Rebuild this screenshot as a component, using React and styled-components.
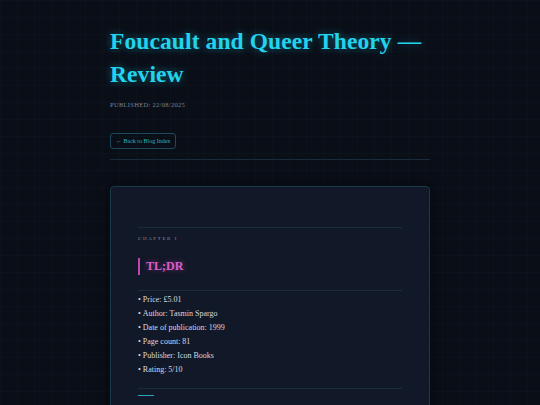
import React from "react";
import styled, { createGlobalStyle } from "styled-components";

const GlobalStyle = createGlobalStyle`
  html, body {
    margin: 0;
    padding: 0;
    background-color: #0a0e17;
  }
  body {
    font-family: "Liberation Serif", "DejaVu Serif", serif;
    color: #d4d8e0;
  }
`;

const chapters = [
  {
    label: "Chapter I",
    title: "TL;DR",
    items: [
      "Price: £5.01",
      "Author: Tasmin Spargo",
      "Date of publication: 1999",
      "Page count: 81",
      "Publisher: Icon Books",
      "Rating: 5/10",
    ],
  },
  { label: "Chapter II", accent: true },
];

export default function App() {
  return (
    <Layout>
      <GlobalStyle />
      <Column>
        <Title>Foucault and Queer Theory — Review</Title>
        <Published>Published: 22/08/2025</Published>
        <BackButton href="#">← Back to Blog Index</BackButton>
        <Divider />
        <Card>
          {chapters.map((ch, i) => (
            <Chapter key={i}>
              <ChapterRule />
              {ch.accent && <Accent />}
              <ChapterLabel>{ch.label}</ChapterLabel>
              {ch.title && <Heading>{ch.title}</Heading>}
              {ch.items && (
                <>
                  <ChapterRule />
                  <List>
                    {ch.items.map((item) => (
                      <Item key={item}>{item}</Item>
                    ))}
                  </List>
                </>
              )}
            </Chapter>
          ))}
        </Card>
      </Column>
    </Layout>
  );
}

const Layout = styled.div`
  height: 405px;
  overflow: hidden;
  background-color: #0a0e17;
  background-image:
    linear-gradient(rgba(60, 120, 160, 0.045) 1px, transparent 1px),
    linear-gradient(90deg, rgba(60, 120, 160, 0.035) 1px, transparent 1px);
  background-size: 17px 17px;
`;

const Column = styled.div`
  width: 320px;
  margin: 0 auto;
  padding-top: 25px;
`;

const Title = styled.h1`
  margin: 0;
  font-family: "Liberation Serif", serif;
  font-weight: bold;
  font-size: 23.5px;
  line-height: 33px;
  letter-spacing: 0.1px;
  color: #22d3ee;
  text-shadow: 0 0 8px rgba(34, 211, 238, 0.45);
`;

const Published = styled.div`
  margin-top: 10px;
  font-size: 6.5px;
  letter-spacing: 0.3px;
  text-transform: uppercase;
  color: #7b8392;
`;

const BackButton = styled.a`
  display: inline-flex;
  align-items: center;
  margin-top: 25px;
  height: 16px;
  padding: 0 5px;
  box-sizing: border-box;
  border: 1px solid #1d4a5a;
  border-radius: 3px;
  font-size: 6px;
  color: #2bb5cc;
  text-decoration: none;
`;

const Divider = styled.div`
  margin-top: 10px;
  height: 1px;
  background: #1a2b3a;
`;

const Card = styled.div`
  margin-top: 26px;
  padding: 40px 27px 0;
  min-height: 260px;
  background: #111827;
  border: 1px solid #19384a;
  border-radius: 4px;
  box-shadow: 0 0 14px rgba(0, 0, 0, 0.6), 0 0 6px rgba(34, 211, 238, 0.05);
`;

const Chapter = styled.section`
  display: flex;
  flex-direction: column;
`;

const ChapterRule = styled.div`
  height: 1px;
  background: #1b2c3c;
`;

const Accent = styled.div`
  width: 16px;
  height: 1px;
  margin-top: 6px;
  background: #2ba3b8;
`;

const ChapterLabel = styled.div`
  margin-top: 8px;
  font-size: 5px;
  letter-spacing: 1.6px;
  text-transform: uppercase;
  color: #8a91a0;
`;

const Heading = styled.h2`
  margin: 17px 0 15px;
  padding-left: 6px;
  border-left: 2px solid #c543b0;
  font-family: "Liberation Serif", serif;
  font-weight: bold;
  font-size: 12px;
  line-height: 17px;
  color: #e05ccb;
  text-shadow: 0 0 6px rgba(224, 92, 203, 0.45);
`;

const List = styled.ul`
  list-style: none;
  margin: 2px 0 11px;
  padding: 0;
`;

const Item = styled.li`
  font-size: 8px;
  line-height: 14px;
  color: #d6dae2;
  &::before {
    content: "•";
    margin-right: 2px;
  }
`;
